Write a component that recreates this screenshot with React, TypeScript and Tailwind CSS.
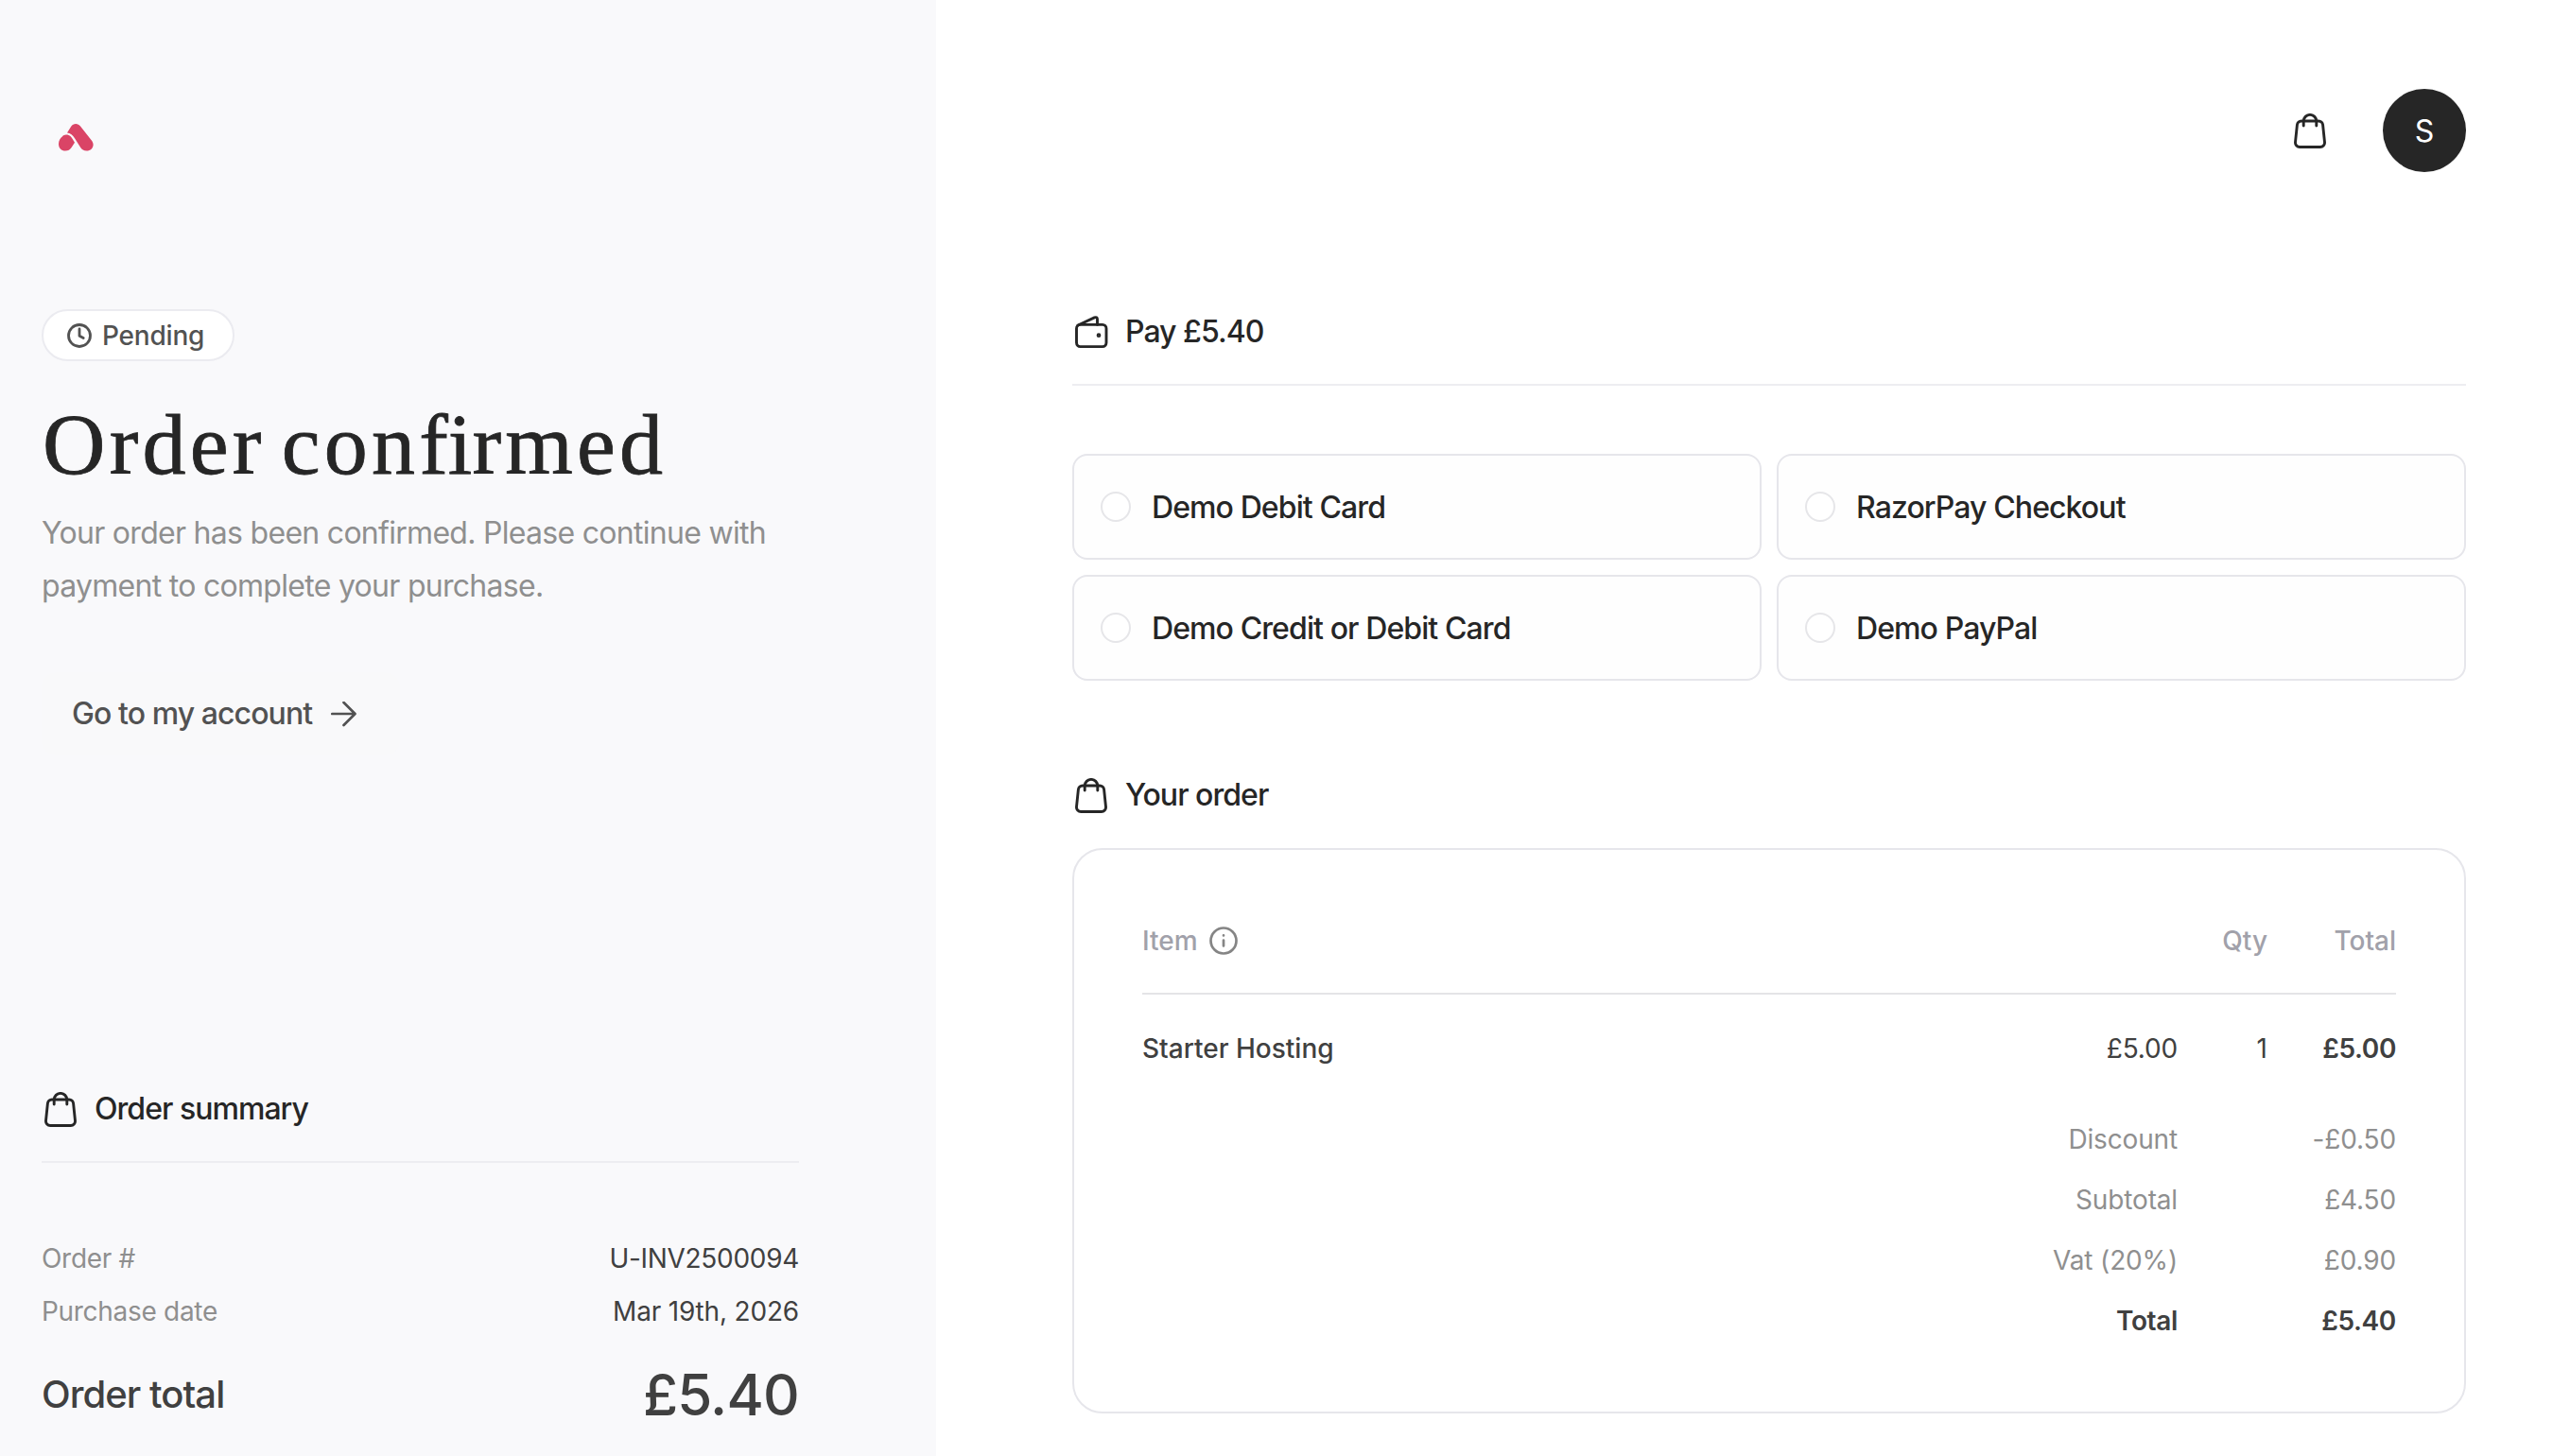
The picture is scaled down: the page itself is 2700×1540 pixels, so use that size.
import type { ReactNode } from 'react';

const PAYMENT_METHODS = ['Demo Debit Card', 'RazorPay Checkout', 'Demo Credit or Debit Card', 'Demo PayPal'];

const TOTALS = [
  { label: 'Discount', value: '-£0.50' },
  { label: 'Subtotal', value: '£4.50' },
  { label: 'Vat (20%)', value: '£0.90' },
  { label: 'Total', value: '£5.40', strong: true },
];

function LogoMark() {
  return (
    <svg className="ml-[18px] h-[30px] w-[37px]" viewBox="0 0 37 30" fill="#da4466">
      <path d="M9 10.5 13.2 3.8C15.5.2 20.6.2 23 3.6L35.4 19.2C38.6 24 35 29.6 29.6 29.6C26.6 29.6 24.6 28.2 23.2 26L17 16.2C15 13 12.5 10.8 9 10.5Z" />
      <path d="M7.8 12.6C11.5 12.4 13.6 14.5 17 20.8L13.6 26C12 28.4 10 29.6 7.2 29.6C2.8 29.6 0 26.4 0 22.2C0 18.4 2 16 3.8 14.4C5 13.2 6.2 12.7 7.8 12.6Z" />
    </svg>
  );
}

function BagIcon() {
  return (
    <svg className="h-[37px] w-[34px]" viewBox="0 0 34 37" fill="none" stroke="currentColor" strokeWidth="2.9" strokeLinecap="round" strokeLinejoin="round">
      <path d="M8 8h18a4.6 4.6 0 0 1 4.6 4.1l1.9 18.2a4.7 4.7 0 0 1-4.7 5.2H6.2a4.7 4.7 0 0 1-4.7-5.2l1.9-18.2A4.6 4.6 0 0 1 8 8Z" />
      <path d="M10.200 13V8.200a6.800 6.800 0 0 1 13.600 0V13" />
    </svg>
  );
}

function WalletIcon() {
  return (
    <svg className="h-[35px] w-[35px]" viewBox="0 0 35 35" fill="none" stroke="currentColor" strokeWidth="2.9" strokeLinecap="round" strokeLinejoin="round">
      <rect x="1.5" y="9.4" width="31.5" height="23.2" rx="4" />
      <path d="M3 10 20.500 1.900C22.300 1.100 23.500 1.900 23.500 3.600V9.400" />
      <circle cx="25" cy="20.700" r=".9" fill="currentColor" />
    </svg>
  );
}

function ClockIcon() {
  return (
    <svg className="size-[26px]" viewBox="0 0 26 26" fill="none" stroke="currentColor" strokeWidth="2.8" strokeLinecap="round" strokeLinejoin="round">
      <circle cx="13" cy="13" r="11.5" />
      <path d="M13 6v7.200l4.200 2.300" />
    </svg>
  );
}

function ArrowIcon() {
  return (
    <svg className="h-[27px] w-[27px]" viewBox="0 0 27 27" fill="none" stroke="currentColor" strokeWidth="2.7" strokeLinecap="round" strokeLinejoin="round">
      <path d="M1.300 13h24M13.500 1l12 12-12 12" />
    </svg>
  );
}

function InfoIcon() {
  return (
    <svg className="size-[30px] text-[#858585]" viewBox="0 0 30 30" fill="none" stroke="currentColor" strokeWidth="2.7" strokeLinecap="round">
      <circle cx="15" cy="15" r="13.5" />
      <path d="M15 14.500v6M15 9.400v.1" />
    </svg>
  );
}

function SectionHeading({ icon, children }: { icon: ReactNode; children: ReactNode }) {
  return (
    <h2 className="flex h-12 items-center text-[32px] font-medium tracking-[-0.97px] text-[#262626]">
      <span className="flex w-14 pl-[3px]">{icon}</span>
      {children}
    </h2>
  );
}

function Sidebar() {
  return (
    <aside className="flex w-[990px] shrink-0 flex-col bg-[#f9f9fb] pl-11 pr-[145px] pt-[130px]">
      <LogoMark />

      <div className="mt-[167px] flex h-[55px] w-[204px] items-center gap-[11px] rounded-full border-2 border-[#ebebf0] bg-white pl-[25px] text-[28px] font-medium tracking-[-0.2px] text-[#525252]">
        <ClockIcon />
        Pending
      </div>

      <h1 className="mt-[36px] whitespace-nowrap pl-px font-['Liberation_Serif',serif] text-[92px] leading-[104px] tracking-[4.2px] text-[#262626] [-webkit-text-stroke:0.8px_#262626] [word-spacing:-10px]">
        Order con<span className="tracking-normal">fi</span>rmed
      </h1>
      <p className="mt-[14px] text-[32px] leading-[56px] tracking-[-0.71px] text-[#8f8f8f]">
        Your order has been confirmed. Please continue with payment to complete your purchase.
      </p>

      <button className="mt-[63px] flex h-[88px] w-[379px] items-center gap-5 rounded-2xl bg-[#f9f9fa] pl-8 text-[32px] font-medium tracking-[-0.92px] text-[#525252]">
        Go to my account
        <ArrowIcon />
      </button>

      <section className="mt-[350px]">
        <div className="border-b-2 border-[#ededf1] pb-[31px]">
          <SectionHeading icon={<BagIcon />}>Order summary</SectionHeading>
        </div>
        <dl className="mt-[73px] text-[28px] leading-[56px] tracking-[-0.3px]">
          <div className="flex justify-between">
            <dt className="text-[#8f8f8f]">Order #</dt>
            <dd className="text-[#404040]">U-INV2500094</dd>
          </div>
          <div className="flex justify-between">
            <dt className="text-[#8f8f8f]">Purchase date</dt>
            <dd className="tracking-[-0.18px] text-[#404040]">Mar 19th, 2026</dd>
          </div>
        </dl>
        <div className="mt-5 flex h-20 items-center justify-between font-medium text-[#404040]">
          <span className="text-[40px] tracking-[-0.95px]">Order total</span>
          <span className="text-[60px] tracking-[-0.8px]">£5.40</span>
        </div>
      </section>
    </aside>
  );
}

function OrderTable() {
  return (
    <div className="mt-8 h-[598px] rounded-[32px] border-2 border-[#e6e6eb] px-[72px] pt-[76px] text-[28px]">
      <div className="grid grid-cols-[1fr_95px_136px] items-center border-b-2 border-[#e4e4e7] pb-[35px] font-medium leading-10 text-[#a1a1aa]">
        <span className="flex items-center gap-3">
          Item
          <InfoIcon />
        </span>
        <span className="text-right">Qty</span>
        <span className="text-right">Total</span>
      </div>

      <div className="mt-[29px] grid grid-cols-[1fr_95px_136px] leading-[56px] text-[#404040]">
        <div className="flex justify-between">
          <span className="font-medium">Starter Hosting</span>
          <span className="tracking-[-0.15px]">£5.00</span>
        </div>
        <span className="text-right">1</span>
        <span className="text-right font-semibold tracking-[-0.4px]">£5.00</span>
      </div>

      <div className="mt-9 leading-[64px]">
        {TOTALS.map((row) => (
          <div
            key={row.label}
            className={`grid grid-cols-[1fr_231px] text-right ${row.strong ? 'font-semibold tracking-[-0.35px] text-[#404040]' : 'tracking-[-0.15px] text-[#8f8f8f]'}`}
          >
            <span>{row.label}</span>
            <span>{row.value}</span>
          </div>
        ))}
      </div>
    </div>
  );
}

export default function App() {
  return (
    <div className="flex h-[1540px] w-[2700px] overflow-hidden bg-white font-['Inter',sans-serif]">
      <Sidebar />

      <main className="flex-1 pl-36 pr-[92px] pt-[94px]">
        <header className="flex items-center justify-end gap-[60px] text-[#262626]">
          <BagIcon />
          <div className="flex size-[88px] items-center justify-center rounded-full bg-[#262626] pt-px text-[32px] text-white">
            S
          </div>
        </header>

        <section className="mt-[145px]">
          <div className="border-b-2 border-[#ededf1] pb-[31px]">
            <SectionHeading icon={<WalletIcon />}>Pay £5.40</SectionHeading>
          </div>
          <div className="mt-[72px] grid grid-cols-2 gap-4">
            {PAYMENT_METHODS.map((method) => (
              <label
                key={method}
                className="flex h-28 items-center gap-[22px] rounded-2xl border-2 border-[#e6e6eb] bg-[#fefefe] pl-7 text-[32px] font-medium tracking-[-0.9px] text-[#262626]"
              >
                <span className="size-8 rounded-full border-2 border-[#e6e6e9] bg-white" />
                <span className="pt-0.5">{method}</span>
              </label>
            ))}
          </div>
        </section>

        <section className="mt-[97px]">
          <SectionHeading icon={<BagIcon />}>Your order</SectionHeading>
          <OrderTable />
        </section>
      </main>
    </div>
  );
}
